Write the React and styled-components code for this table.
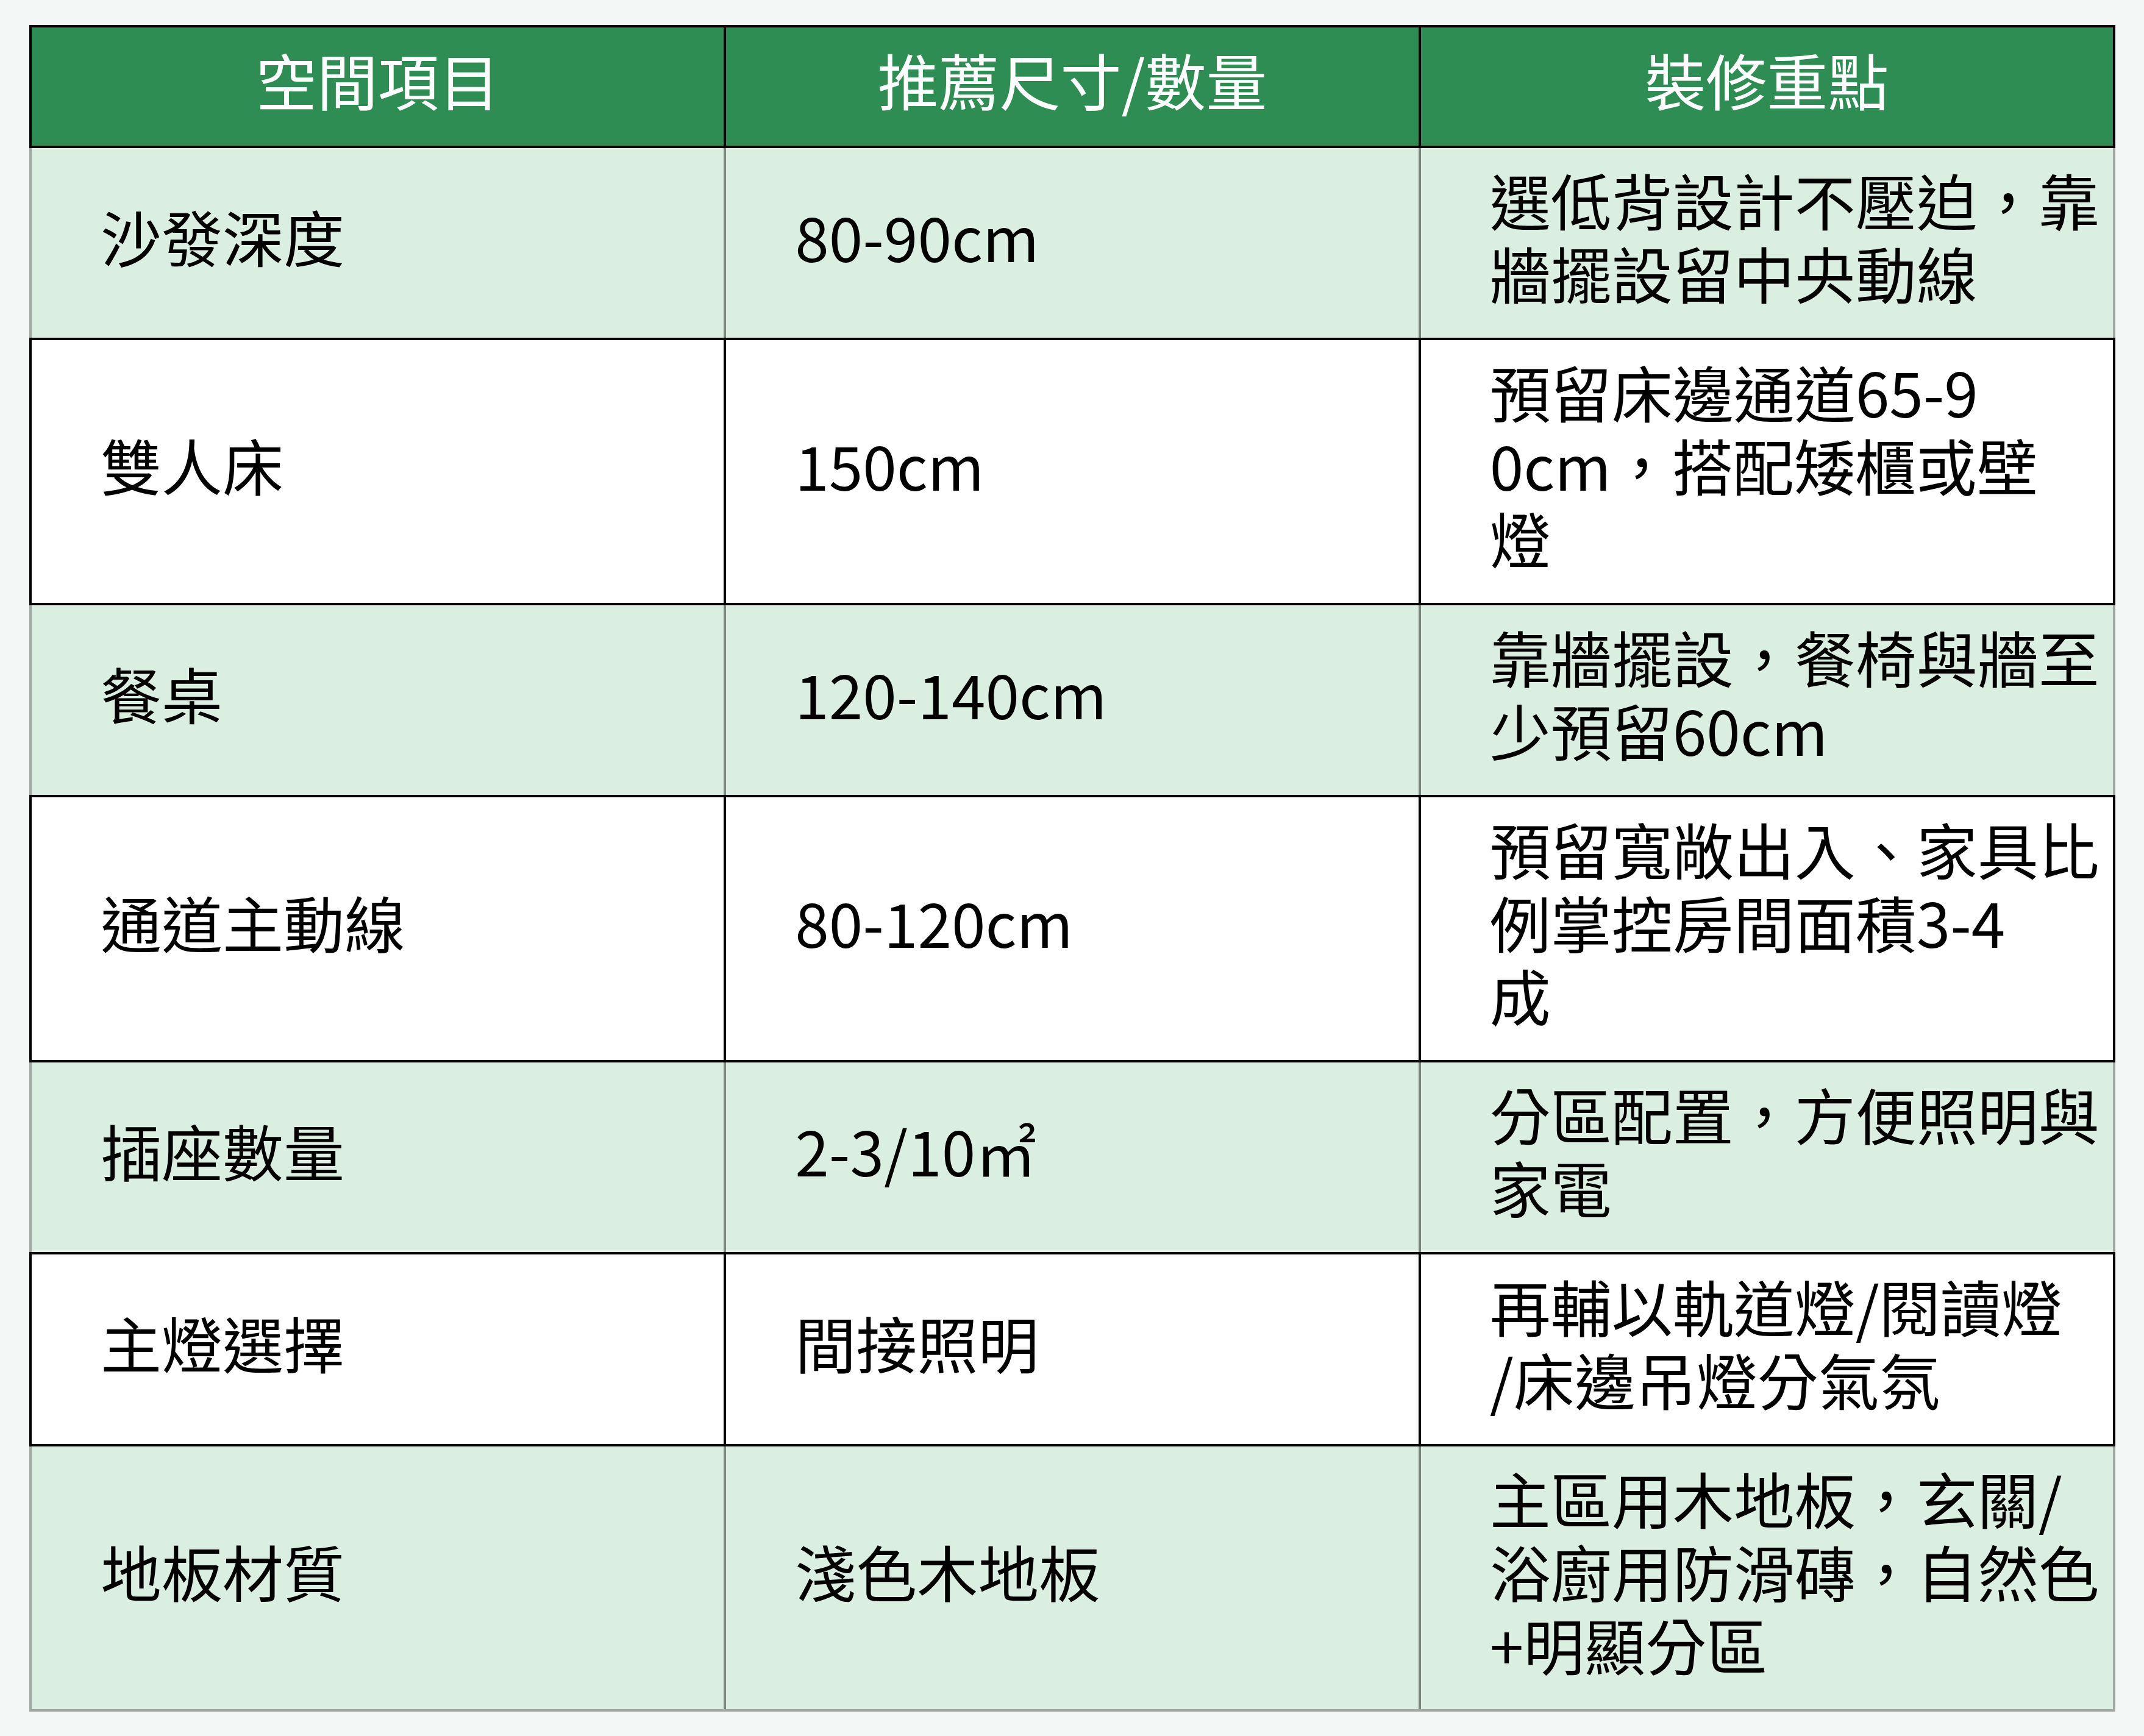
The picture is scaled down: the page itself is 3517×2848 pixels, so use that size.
import React from 'react'
import styled, { createGlobalStyle } from 'styled-components'

const GlobalStyle = createGlobalStyle`
  html, body {
    margin: 0;
    padding: 0;
    background: #f3f7f5;
  }
  body {
    font-family: "Noto Sans CJK TC", "Noto Sans", sans-serif;
  }
`

const tones = {
  head: { fill: '#2e8d52', divider: '#000', edge: '#000' },
  white: { fill: '#fff', divider: '#000', edge: '#000' },
  green: { fill: '#dbeee2', divider: '#7b8680', edge: '#9fa8a2' },
}

const Page = styled.div`
  padding: 41px 47px 41px 48px;
`

const Table = styled.div`
  display: flex;
  flex-direction: column;
`

const Row = styled.div`
  display: grid;
  grid-template-columns: repeat(3, 1fr);
  column-gap: 4px;
  background: ${(p) => tones[p.$tone].divider};
  border: 4px solid ${(p) => tones[p.$tone].edge};
  ${(p) =>
    p.$tone === 'green' &&
    `
    border-top: none;
    border-bottom: none;
    &:last-child { border-bottom: 4px solid ${tones.green.edge}; }
  `}
`

// text sits a bit high in the cells of the reference
const Cell = styled.div`
  display: flex;
  align-items: center;
  justify-content: ${(p) => (p.$head ? 'center' : 'flex-start')};
  padding: ${(p) => (p.$head ? '25px 0 49px' : '24px 16px 47px 113px')};
  background: ${(p) => tones[p.$tone].fill};
  color: ${(p) => (p.$head ? '#fff' : '#000')};
  font-size: 100px;
  line-height: 120px;
`

const Lines = styled.div`
  display: flex;
  flex-direction: column;
`

const Line = styled.span`
  display: block;
  white-space: nowrap;
`

const headers = ['空間項目', '推薦尺寸/數量', '裝修重點']

const rows = [
  ['沙發深度', '80-90cm', ['選低背設計不壓迫，靠', '牆擺設留中央動線']],
  ['雙人床', '150cm', ['預留床邊通道65-9', '0cm，搭配矮櫃或壁', '燈']],
  ['餐桌', '120-140cm', ['靠牆擺設，餐椅與牆至', '少預留60cm']],
  ['通道主動線', '80-120cm', ['預留寬敞出入、家具比', '例掌控房間面積3-4', '成']],
  ['插座數量', '2-3/10㎡', ['分區配置，方便照明與', '家電']],
  ['主燈選擇', '間接照明', ['再輔以軌道燈/閱讀燈', '/床邊吊燈分氣氛']],
  ['地板材質', '淺色木地板', ['主區用木地板，玄關/', '浴廚用防滑磚，自然色', '+明顯分區']],
]

const App = () => {
  return (
    <Page>
      <GlobalStyle />
      <Table>
        <Row $tone="head">
          {headers.map((h) => (
            <Cell key={h} $tone="head" $head>
              {h}
            </Cell>
          ))}
        </Row>
        {rows.map(([item, size, notes], i) => {
          const tone = i % 2 === 0 ? 'green' : 'white'
          return (
            <Row key={item} $tone={tone}>
              <Cell $tone={tone}>{item}</Cell>
              <Cell $tone={tone}>{size}</Cell>
              <Cell $tone={tone}>
                <Lines>
                  {notes.map((n) => (
                    <Line key={n}>{n}</Line>
                  ))}
                </Lines>
              </Cell>
            </Row>
          )
        })}
      </Table>
    </Page>
  )
}

export default App
